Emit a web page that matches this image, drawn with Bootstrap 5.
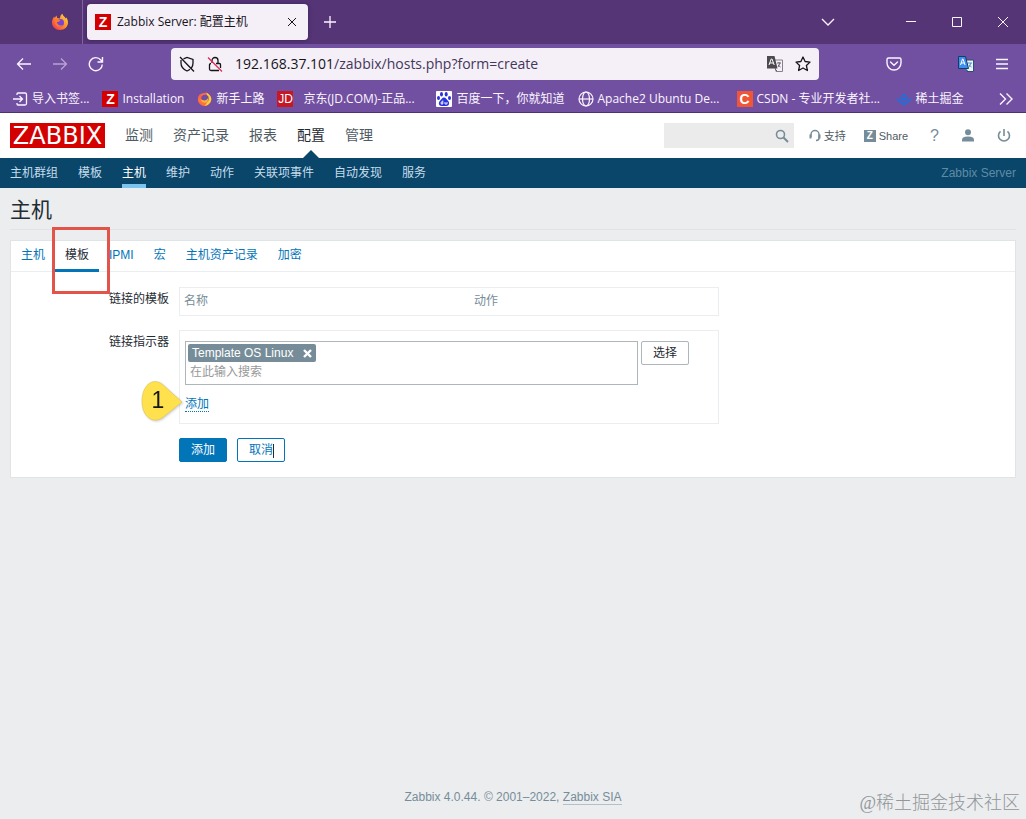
<!DOCTYPE html>
<html lang="zh-CN">
<head>
<meta charset="utf-8">
<meta name="viewport" content="width=device-width, initial-scale=1">
<title>Zabbix Server: 配置主机</title>
<link rel="stylesheet" href="https://cdn.jsdelivr.net/npm/bootstrap@5.3.0/dist/css/bootstrap.min.css">
<script src="https://cdn.jsdelivr.net/npm/bootstrap@5.3.0/dist/js/bootstrap.bundle.min.js"></script>
<style>
  body { background: #ebedef; color: #1f2c33; font: 12px/16px "Liberation Sans", "Noto Sans CJK SC", sans-serif; }
  svg { display: block; flex: none; }
  button { color: inherit; }
  .icon-button { background: none; border: 0; padding: 0; display: block; flex: none; }

  /* browser window */
  .window-ui { font-family: "Open Sans", "Noto Sans CJK SC", sans-serif; color: #fbf5ff; background: #7150a1; border-bottom: 1px solid #4c3270; }
  .title-bar { height: 44px; background: #563577; }
  .launcher { width: 83px; border-right: 1px solid #7f62a0; padding-left: 51px; }
  .window-tab { width: 221px; height: 36px; margin-left: 4px; padding: 0 10px 0 8px; gap: 6px; background: #f5eff8; color: #15141a; border-radius: 4px; box-shadow: 0 0 4px #3a2058; }
  .window-controls { gap: 34px; padding-right: 17px; }
  .tab-list-button { margin-right: 36px; }
  .toolbar { height: 40px; padding: 0 16px; gap: 20px; }
  .address { height: 32px; margin: 0 47px; padding: 0 8px; gap: 12px; background: #f5eff8; color: #15141a; border-radius: 4px; }
  .address-text { font-size: 14px; line-height: 20px; min-width: 0; }
  .address-path { color: #43375a; }
  .pocket-button { margin-right: 36px; }
  .bookmarks { height: 28px; padding: 1px 12px 0; gap: 13px; }
  .bookmarks a { display: flex; align-items: center; gap: 4px; color: inherit; text-decoration: none; white-space: nowrap; }
  .bookmarks .long-mark { min-width: 146px; }
  .letter-icon { width: 16px; height: 16px; font: bold 14px/16px "Liberation Sans", sans-serif; text-align: center; color: #fff; background: #d40000; flex: none; }
  .jd-icon { font-size: 12px; font-weight: 400; background: #c81623; margin-right: 6px; }
  .csdn-icon { background: #f05537; }

  /* application header */
  .app-header { height: 45px; padding: 0 15px 0 10px; background: #fff; }
  .brand { width: 95px; height: 25px; margin-right: 20px; background: #d40000; color: #fff; font: 24px/26px "DejaVu Sans", sans-serif; text-align: center; text-decoration: none; flex: none; }
  .main-menu { gap: 20px; font-size: 14px; line-height: 45px; }
  .main-menu a { color: #4f5b62; text-decoration: none; position: relative; }
  .main-menu a.active { color: #1f2c33; }
  .main-menu a.active::after { content: ""; position: absolute; bottom: 0; left: 50%; margin-left: -8px; border: 8px solid transparent; border-top: 0; border-bottom-color: #0a466a; }
  .search-form { width: 130px; height: 25px; padding-right: 5px; background: #ebebeb; }
  .search-form input { min-width: 0; border: 0; background: none; outline: 0; }
  .header-tools { margin-left: 15px; gap: 18px; }
  .icon-tools { margin-left: 4px; gap: 22px; }
  .header-link { color: #4f5b62; text-decoration: none; gap: 3px; font-size: 11px; }
  .help-link { color: #768d99; text-decoration: none; font-size: 16px; }
  .share-mark { width: 12px; height: 12px; background: #768d99; color: #fff; font-weight: bold; font-size: 10px; line-height: 12px; text-align: center; }
  .sub-menu { height: 30px; padding: 0 10px; gap: 20px; background: #0a466a; line-height: 30px; }
  .sub-menu a { color: #c5dcea; text-decoration: none; height: 30px; }
  .sub-menu a.active { color: #fff; border-bottom: 4px solid #7cc4f0; }
  .server-name { color: #5f8ba5; }

  /* page */
  .page-title { margin: 0 10px 10px; height: 42px; border-bottom: 1px solid #dfe4e7; font-size: 21px; line-height: 44px; font-weight: 400; }
  .panel { margin: 0 10px; background: #fff; border: 1px solid #dfe4e7; padding-bottom: 15px; }
  .form-tabs { height: 31px; border-bottom: 1px solid #ebeef0; margin-bottom: 15px; }
  .form-tabs button { background: none; border: 0; border-bottom: 3px solid transparent; padding: 0 10px; line-height: 28px; height: 31px; color: #0275b8; position: relative; }
  .form-tabs button.active { color: #1f2c33; border-bottom-color: #0275b8; }
  .tab-frame { position: absolute; left: -3px; top: -14px; width: 58px; height: 67px; border: 3px solid #e2544a; pointer-events: none; }
  .form-line { gap: 10px; margin-bottom: 14px; }
  .line-label { width: 158px; text-align: right; padding-top: 4px; flex: none; }
  .line-body { width: 540px; border: 1px solid #ebeef0; position: relative; }
  .picker-body { padding: 10px 5px 11px; }
  .picker-body .multi { margin-right: 3px; }
  .linked-table { width: 100%; color: #768d99; }
  .linked-table th { font-weight: 400; height: 27px; padding: 0 4px 1px; line-height: 16px; }
  .name-column { width: 290px; }
  .multi { width: 453px; height: 44px; border: 1px solid #acb6bb; padding: 2px; }
  .chip { width: 128px; height: 18px; padding: 0 4px; line-height: 18px; background: #768d99; color: #fff; border-radius: 2px; }
  .multi input { border: 0; outline: 0; padding: 0 2px; height: 20px; width: 100%; display: block; }
  .multi input::placeholder { color: #999; opacity: 1; }
  .add-line { padding-top: 11px; }
  .action-button { height: 24px; padding: 0; line-height: 22px; font-size: 12px; border-radius: 2px; border: 1px solid #0275b8; width: 48px; white-space: nowrap; position: relative; }
  .action-main { background: #0275b8; color: #fff; }
  .action-plain { background: #fff; color: #0275b8; }
  .action-plain::after { content: ""; position: absolute; right: 10px; top: 5px; height: 14px; border-right: 1px solid #1f2c33; }
  .action-select { background: #fff; border-color: #acb6bb; color: #1f2c33; }
  .dotted-link { color: #0275b8; text-decoration: none; border-bottom: 1px dotted #0275b8; }
  .step-marker { position: absolute; left: -42px; top: 47px; filter: drop-shadow(1px 1px 1px #8886); font-family: "Liberation Sans", sans-serif; }
  .page-footer { color: #768d99; padding-bottom: 14px; position: relative; }
  .page-footer a { color: inherit; text-decoration: none; border-bottom: 1px solid #b5c0c6; }
  .watermark { position: absolute; right: 6px; bottom: 4px; color: #929699; font: 300 18px/24px "Liberation Serif", "Noto Sans CJK SC", serif; }
</style>
</head>
<body class="d-flex flex-column min-vh-100">

<div class="window-ui">
  <div class="title-bar d-flex align-items-center">
    <div class="launcher d-flex align-items-center align-self-stretch">
      <svg width="18" height="18" viewBox="0 0 18 18"><defs><linearGradient id="flame" x1="1" y1="0" x2="0" y2="1"><stop offset="0" stop-color="#ffe14a"/><stop offset=".5" stop-color="#ff8a28"/><stop offset="1" stop-color="#f0285a"/></linearGradient></defs><path d="M9 17C4.500 17 1 13.800 1 9.500C1 7 2 5 3.200 3.500L3.600 5L5.500 2.600L6.200 5L9 5.500C9 3.500 10 1.500 11.500.8C11.600 3 14 3.500 14.700 5.500L15.400 4.600C16.500 6 17 8 17 9.500C17 14 13.500 17 9 17Z" fill="url(#flame)"/><circle cx="9.300" cy="9.700" r="3.700" fill="#7545d8"/><path d="M4 6L9.500 6.800L8 8.800L6 9C6 12 9 13 12 12C9 15.500 4 13.500 4 9Z" fill="#ff7a30"/></svg>
    </div>
    <div class="window-tab d-flex align-items-center">
      <span class="letter-icon">Z</span>
      <span class="flex-grow-1 text-nowrap">Zabbix Server: 配置主机</span>
      <button class="icon-button" aria-label="关闭标签页"><svg width="12" height="12" viewBox="0 0 12 12" fill="none" stroke="currentColor"><path d="M2 2L10 10M10 2L2 10"/></svg></button>
    </div>
    <button class="icon-button ms-3" aria-label="新标签页"><svg width="12" height="12" viewBox="0 0 12 12" fill="none" stroke="currentColor" stroke-width="1.300"><path d="M6 0V12M0 6H12"/></svg></button>
    <div class="window-controls d-flex align-items-center ms-auto">
      <button class="icon-button tab-list-button" aria-label="所有标签页"><svg width="14" height="12" viewBox="0 0 14 12" fill="none" stroke="currentColor" stroke-width="1.300"><path d="M1 3L7 9L13 3"/></svg></button>
      <button class="icon-button" aria-label="最小化"><svg width="12" height="12" viewBox="0 0 12 12" stroke="currentColor"><path d="M1 5.500H11"/></svg></button>
      <button class="icon-button" aria-label="最大化"><svg width="12" height="12" viewBox="0 0 12 12" fill="none" stroke="currentColor"><path d="M1.500 1.500H10.500V10.500H1.500Z"/></svg></button>
      <button class="icon-button" aria-label="关闭"><svg width="12" height="12" viewBox="0 0 12 12" stroke="currentColor"><path d="M1 1L11 11M11 1L1 11"/></svg></button>
    </div>
  </div>

  <div class="toolbar d-flex align-items-center">
    <button class="icon-button" aria-label="后退"><svg width="16" height="16" viewBox="0 0 16 16" fill="none" stroke="currentColor" stroke-width="1.300"><path d="M15 8H1.500M7 2.500L1.500 8L7 13.500"/></svg></button>
    <button class="icon-button opacity-50" aria-label="前进"><svg width="16" height="16" viewBox="0 0 16 16" fill="none" stroke="currentColor" stroke-width="1.300"><path d="M1 8H14.500M9 2.500L14.500 8L9 13.500"/></svg></button>
    <button class="icon-button" aria-label="刷新"><svg width="16" height="16" viewBox="0 0 16 16" fill="none" stroke="currentColor" stroke-width="1.400"><path d="M14.300 8.500A6.500 6.500 0 1 1 12.800 4L14 5.300M14.500 1V6H9.500"/></svg></button>
    <div class="address d-flex align-items-center flex-grow-1">
      <svg width="16" height="16" viewBox="0 0 16 16" fill="none" stroke="currentColor" stroke-width="1.300"><path d="M4.500 2.800L8 1.500L14 3.500V7C14 9 13.500 10.500 12.500 12M2 4V7C2 11 4.500 13.500 8 15C9.200 14.500 10 14 11 13.200M1 1L15 15.500"/></svg>
      <svg width="16" height="16" viewBox="0 0 16 16" fill="none" stroke="currentColor" stroke-width="1.300"><path d="M5 7V4.500A3 3 0 0 1 11 4.500V7M9 7.500H12.500Q13.500 7.500 13.500 8.500V12M4 7.500Q2.500 7.500 2.500 9V13Q2.500 14.500 4 14.500H12"/><path d="M1 1.500L15 15.500" stroke="#e22850"/></svg>
      <div class="address-text flex-grow-1 text-nowrap">192.168.37.101<span class="address-path">/zabbix/hosts.php?form=create</span></div>
      <svg width="16" height="16" viewBox="0 0 16 16"><path d="M6.500 4H15.500V15.500H9Z" fill="#f5eff8" stroke="#85808a"/><path d="M0 0H7.500L10.500 12.500H0Z" fill="#4c494f"/><path d="M2 9L4.200 3H5L7.200 9M3 7H6.500" fill="none" stroke="#fff"/><path d="M10 7H14M12 6V7M13 7L11 11M11 9L13.500 11M8 13L10 15" fill="none" stroke="#67636b"/></svg>
      <svg width="16" height="16" viewBox="0 0 16 16" fill="none" stroke="currentColor" stroke-width="1.300" stroke-linejoin="round"><path d="M8 1L10.100 5.500L15 6.100L11.400 9.500L12.400 14.500L8 12L3.600 14.500L4.600 9.500L1 6.100L5.900 5.500Z"/></svg>
    </div>
    <button class="icon-button pocket-button" aria-label="Pocket"><svg width="16" height="16" viewBox="0 0 16 16" fill="none" stroke="currentColor" stroke-width="1.400" stroke-linecap="round"><path d="M2.500 2H13.500Q15 2 15 3.500V7A7 7 0 0 1 1 7V3.500Q1 2 2.500 2ZM4.500 6L8 9.300L11.500 6"/></svg></button>
    <button class="icon-button" aria-label="翻译"><svg width="16" height="16" viewBox="0 0 16 16"><path d="M6.500 4H15.500V15.500H9Z" fill="#eef3f7" stroke="#284f75"/><path d="M.5.500H7.500L10.500 12.500H.5Z" fill="#3c91ef" stroke="#173a61"/><path d="M2.500 9L4.500 3H5L7 9M3 7H6.500" fill="none" stroke="#fff"/><path d="M10 7H14M13 7L11 11M11 9L13.500 11M8 13L10 15" fill="none" stroke="#4b90c7"/></svg></button>
    <button class="icon-button" aria-label="菜单"><svg width="16" height="16" viewBox="0 0 16 16" stroke="currentColor" stroke-width="1.300"><path d="M2 3.500H14M2 8H14M2 12.500H14"/></svg></button>
  </div>

  <nav class="bookmarks d-flex align-items-center" aria-label="书签">
    <a href="#"><svg width="16" height="16" viewBox="0 0 16 16" fill="none" stroke="currentColor" stroke-width="1.300"><path d="M5 4V3Q5 2 6 2H13Q14.500 2 14.500 3.500V12.500Q14.500 14 13 14H6Q5 14 5 13V12M1 8H10.500M7.500 5L10.500 8L7.500 11"/></svg>导入书签...</a>
    <a href="#"><span class="letter-icon">Z</span>Installation</a>
    <a href="#"><svg width="15" height="16" viewBox="0 0 16 16"><circle cx="8" cy="8.500" r="7" fill="#ff7139"/><path d="M1 7L3 3L6 5L9 1Q15 3 15 9Z" fill="#ff5f52"/><path d="M10 1Q18 6 14 12Q12 15 8 15.500Q13 11 10 1Z" fill="#ffca3a"/><circle cx="8.500" cy="7.500" r="4" fill="#7150a1"/><path d="M8 9.500Q10.500 9.500 12 7Q12 12 8 12Q4.500 12 4 8Q5 9.500 8 9.500Z" fill="#ffb13d"/></svg>新手上路</a>
    <a href="#" class="long-mark"><span class="letter-icon jd-icon">JD</span>京东(JD.COM)-正品...</a>
    <a href="#"><svg width="16" height="16" viewBox="0 0 16 16"><rect width="16" height="16" rx="1" fill="#fff"/><g fill="#2b32dc"><ellipse cx="5.500" cy="3.200" rx="1.500" ry="2.200"/><ellipse cx="10.200" cy="3.200" rx="1.500" ry="2.200"/><ellipse cx="2.500" cy="7" rx="1.500" ry="2"/><ellipse cx="13.500" cy="7" rx="1.500" ry="2"/><path d="M8 6.500C10 6.500 10.500 8.500 12.200 10C14 12 13 15 10.500 15H5.500C3 15 2 12 3.800 10C5.500 8.500 6 6.500 8 6.500Z"/></g><path d="M6.800 9.500V13H5.200V11H6.800M9 11V13H11V11" fill="none" stroke="#fff" stroke-width=".9"/></svg>百度一下，你就知道</a>
    <a href="#" class="long-mark"><svg width="16" height="16" viewBox="0 0 16 16" fill="none" stroke="currentColor" stroke-width="1.200"><circle cx="8" cy="8" r="7"/><ellipse cx="8" cy="8" rx="3.500" ry="7"/><path d="M1 8H15"/></svg>Apache2 Ubuntu De...</a>
    <a href="#" class="long-mark"><span class="letter-icon csdn-icon">C</span>CSDN - 专业开发者社...</a>
    <a href="#"><svg width="16" height="16" viewBox="0 0 16 16" fill="none" stroke="#1e70dd" stroke-width="2"><path d="M6.500 3.500L8 4.700L9.500 3.500M4 6L8 9L12 6M1 8L8 13.500L15 8"/></svg>稀土掘金</a>
    <button class="icon-button ms-auto" aria-label="更多书签"><svg width="16" height="14" viewBox="0 0 16 14" fill="none" stroke="currentColor" stroke-width="1.400"><path d="M2 1.500L7.500 7L2 12.500M8.500 1.500L14 7L8.500 12.500"/></svg></button>
  </nav>
</div>

<header>
  <div class="app-header d-flex align-items-center">
    <a class="brand" href="#">ZABBIX</a>
    <nav class="main-menu d-flex" aria-label="主菜单">
      <a href="#">监测</a><a href="#">资产记录</a><a href="#">报表</a><a href="#" class="active">配置</a><a href="#">管理</a>
    </nav>
    <form class="search-form d-flex align-items-center ms-auto">
      <input type="search" class="flex-grow-1" aria-label="搜索">
      <button type="button" class="icon-button" aria-label="搜索"><svg width="14" height="14" viewBox="0 0 14 14" fill="none" stroke="#768d99"><circle cx="5.500" cy="5.500" r="4" stroke-width="1.600"/><path d="M8.300 8.300L13 13" stroke-width="2"/></svg></button>
    </form>
    <div class="header-tools d-flex align-items-center">
      <a href="#" class="header-link d-flex align-items-center"><svg width="12" height="13" viewBox="0 0 12 13" fill="none" stroke="#768d99" stroke-width="1.500"><path d="M2 8V5.500A4 4 0 0 1 10 5.500V9Q10 11.500 7 11.500"/><path d="M1.500 5.500V9.500M10.500 5.500V9.500" stroke-width="2"/></svg>支持</a>
      <a href="#" class="header-link d-flex align-items-center"><span class="share-mark">Z</span>Share</a>
      <div class="icon-tools d-flex align-items-center">
        <a href="#" class="help-link" aria-label="帮助">?</a>
        <a href="#" aria-label="用户"><svg width="14" height="13" viewBox="0 0 14 13" fill="#768d99"><circle cx="7" cy="3.200" r="3"/><path d="M1 12.500V10.500Q1 8.500 4 7.800Q7 7.200 10 7.800Q13 8.500 13 10.500V12.500Z"/></svg></a>
        <a href="#" aria-label="退出"><svg width="14" height="14" viewBox="0 0 14 14" fill="none" stroke="#768d99" stroke-width="1.600"><path d="M7 0V7M3.500 2.300A5.500 5.500 0 1 0 10.500 2.300"/></svg></a>
      </div>
    </div>
  </div>
  <nav class="sub-menu d-flex" aria-label="配置">
    <a href="#">主机群组</a><a href="#">模板</a><a href="#" class="active">主机</a><a href="#">维护</a><a href="#">动作</a><a href="#">关联项事件</a><a href="#">自动发现</a><a href="#">服务</a>
    <span class="server-name ms-auto">Zabbix Server</span>
  </nav>
</header>

<main class="flex-grow-1">
  <h1 class="page-title">主机</h1>
  <form class="panel">
    <div class="form-tabs d-flex" role="tablist">
      <button type="button" role="tab">主机</button>
      <button type="button" role="tab" class="active" aria-selected="true">模板<span class="tab-frame"></span></button>
      <button type="button" role="tab">IPMI</button>
      <button type="button" role="tab">宏</button>
      <button type="button" role="tab">主机资产记录</button>
      <button type="button" role="tab">加密</button>
    </div>
    <div class="form-line d-flex">
      <div class="line-label" id="linked">链接的模板</div>
      <div class="line-body">
        <table class="linked-table" aria-labelledby="linked"><thead><tr><th class="name-column">名称</th><th>动作</th></tr></thead></table>
      </div>
    </div>
    <div class="form-line d-flex">
      <label class="line-label" for="template-search">链接指示器</label>
      <div class="line-body picker-body">
        <div class="d-flex align-items-start">
          <div class="multi">
            <div class="chip d-flex align-items-center justify-content-between">Template OS Linux
              <button type="button" class="icon-button" aria-label="移除"><svg width="9" height="9" viewBox="0 0 9 9" stroke="#fff" stroke-width="2.400"><path d="M1 1L8 8M8 1L1 8"/></svg></button>
            </div>
            <input id="template-search" type="text" placeholder="在此输入搜索">
          </div>
          <button type="button" class="action-button action-select">选择</button>
        </div>
        <div class="add-line"><a href="#" class="dotted-link">添加</a></div>
        <svg class="step-marker" width="46" height="46" viewBox="0 0 46 46"><path d="M44 24L24 40C15 46 4 39 4 23C4 8 14-1 24 6Z" fill="#fee14c" stroke="#d9c25a" stroke-width=".6"/><text x="20" y="30" text-anchor="middle" font-size="23" fill="#151515">1</text></svg>
      </div>
    </div>
    <div class="form-line d-flex mb-0">
      <div class="line-label"></div>
      <button type="button" class="action-button action-main">添加</button>
      <button type="button" class="action-button action-plain">取消</button>
    </div>
  </form>
</main>

<footer class="page-footer text-center">Zabbix 4.0.44. © 2001–2022, <a href="#">Zabbix SIA</a>
  <span class="watermark">@稀土掘金技术社区</span>
</footer>
</body>
</html>
